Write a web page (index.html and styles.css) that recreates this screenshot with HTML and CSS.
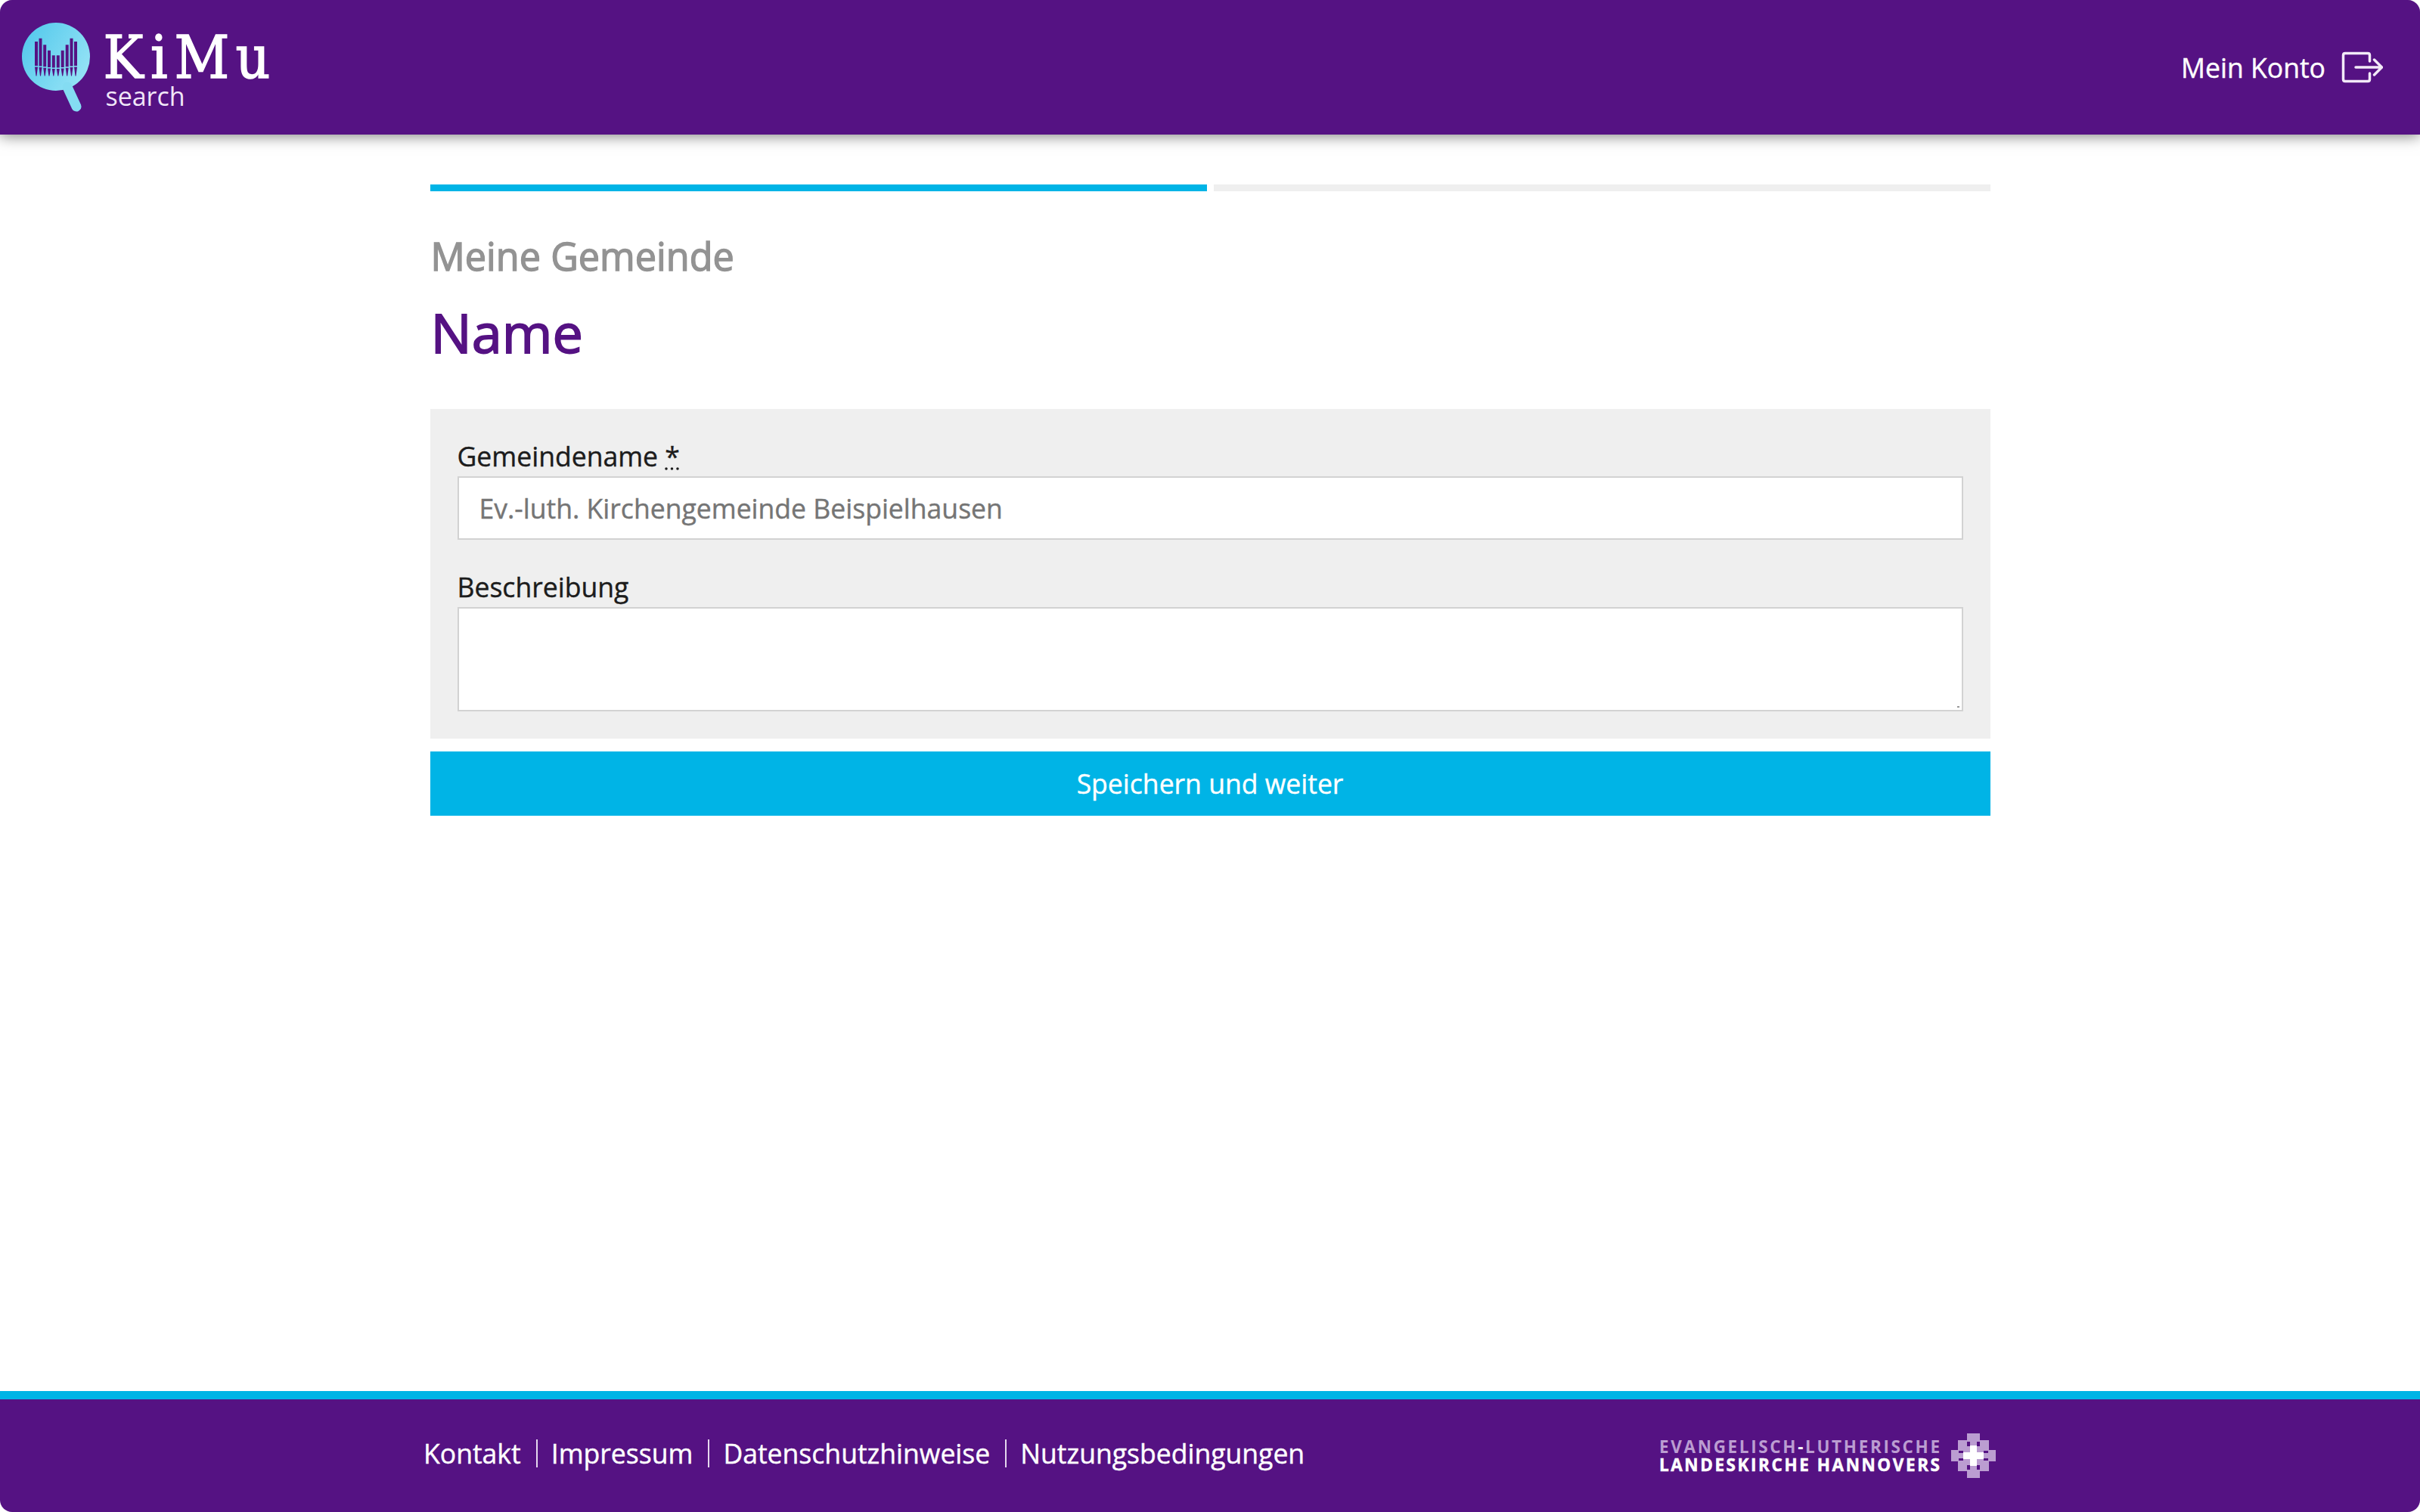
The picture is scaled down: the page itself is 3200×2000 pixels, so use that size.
FILE: index.html
```
<!doctype html>
<html lang="de">
<head>
    <meta charset="UTF-8">
    <meta name="viewport" content="width=device-width, initial-scale=1.0">
    <title>KiMu search</title>
    <link rel="stylesheet" href="styles.css">
</head>
<body>
<div class="page">
    <header class="header">
        <a class="logo" href="#">
            <svg width="370" height="178" viewBox="0 0 370 178">
                <defs>
                    <linearGradient id="glass" x1="0" y1="0.2" x2="1" y2="0.8">
                        <stop offset="0" stop-color="#54c9ec"/>
                        <stop offset="1" stop-color="#98e4f6"/>
                    </linearGradient>
                </defs>
                <circle cx="74" cy="75" r="45" fill="url(#glass)"/>
                <path d="M89 115L101 141" stroke="#84dcf2" stroke-width="13" stroke-linecap="round"/>
                <g fill="#551283">
                    <path d="M46 55h4v32h-4zM51.500 50.700h4v36.800h-4zM57.200 59.300h4v29h-4zM63 66.700h4v22.300h-4zM68.800 73.300h4v16.200h-4zM74.800 73.300h4v16.200h-4zM80.700 66.700h4v22.300h-4zM86.700 59.300h4v29h-4zM92.500 50.700h4v36.800h-4zM98 55h4v32h-4z"/>
                    <path d="M46 88.500h4l-1.500 12h-1zM51.500 89h4l-1.500 11.500h-1zM57.200 89.800h4l-1.500 10.700h-1zM63 90.500h4l-1.500 10h-1zM68.800 91h4l-1.500 9.500h-1zM74.800 91h4l-1.500 9.500h-1zM80.700 90.500h4l-1.500 10h-1zM86.700 89.800h4l-1.500 10.700h-1zM92.500 89h4l-1.500 11.500h-1zM98 88.500h4l-1.500 12h-1z"/>
                </g>
                <text class="logo-name" x="136.500 199 230.500 311.500" y="103">KiMu</text>
                <text class="logo-sub" x="139.500" y="139.500" textLength="105">search</text>
            </svg>
        </a>
        <nav class="account">
            <a href="#">Mein Konto</a>
            <a class="logout" href="#">
                <svg width="56" height="44" viewBox="0 0 56 44">
                    <path d="M38.500 14V6Q38.500 3.500 36 3.500H6Q3.500 3.500 3.500 6V38Q3.500 40.500 6 40.500H36Q38.500 40.500 38.500 38V30M20 22H54M44.500 12L54.500 22L44.500 32"/>
                </svg>
            </a>
        </nav>
    </header>

    <main class="content">
        <div class="progress">
            <span class="step active"></span>
            <span class="step"></span>
        </div>
        <h2>Meine Gemeinde</h2>
        <h1>Name</h1>
        <form>
            <div class="fields">
                <label for="name">Gemeindename <abbr title="Pflichtfeld">*</abbr></label>
                <input id="name" name="name" type="text" placeholder="Ev.-luth. Kirchengemeinde Beispielhausen">
                <label for="description">Beschreibung</label>
                <textarea id="description" name="description"></textarea>
            </div>
            <button type="submit">Speichern und weiter</button>
        </form>
    </main>

    <footer class="footer">
        <nav class="footer-links">
            <a href="#">Kontakt</a>
            <a href="#">Impressum</a>
            <a href="#">Datenschutzhinweise</a>
            <a href="#">Nutzungsbedingungen</a>
        </nav>
        <svg class="church" width="446" height="62" viewBox="0 0 446 62">
            <text class="church-light" x="0" y="27" textLength="371">EVANGELISCH<tspan class="hyphen">-</tspan>LUTHERISCHE</text>
            <text class="church-bold" x="0" y="51" textLength="371">LANDESKIRCHE HANNOVERS</text>
            <g fill="#bb9dd1">
                <path d="M407 1h17v10h-17zM407 50h17v10h-17zM386 23h10v15h-10zM435 23h10v15h-10z"/>
                <path fill-rule="evenodd" d="M395 10h41v13h7v15h-7v13h-41v-13h-7v-15h7zM407 12v6h4v-6zM420 12v6h4v-6zM407 43v6h4v-6zM420 43v6h4v-6zM396 24v3h6v-3zM396 34v3h6v-3zM429 24v3h6v-3zM429 34v3h6v-3z"/>
            </g>
            <path fill="#fff" d="M411 17h9v9h9v9h-9v9h-9v-9h-9v-9h9z"/>
        </svg>
    </footer>
</div>
</body>
</html>
```
FILE: styles.css
```
* {
    box-sizing: border-box;
}
body {
    margin: 0;
    background-color: #FFF;
    color: #1c1c1c;
    font-family: "Open Sans", sans-serif;
    font-size: 35.55px;
    line-height: 54px;
    -webkit-text-stroke: 0.4px;
}
a {
    color: #FFF;
    text-decoration: none;
}
svg {
    display: block;
}
.page {
    display: flex;
    flex-direction: column;
    height: 100vh;
    border-radius: 16px;
    overflow: hidden;
}
.header {
    display: flex;
    align-items: center;
    justify-content: space-between;
    height: 178px;
    padding-right: 49px;
    background-color: #551283;
    box-shadow: 0 2px 18px rgba(0, 0, 0, 0.5);
}
.logo-name {
    fill: #FFF;
    stroke: #FFF;
    stroke-width: 1.4px;
    font-family: "DejaVu Serif Condensed", "DejaVu Serif", serif;
    font-stretch: condensed;
    font-size: 79px;
}
.logo-sub {
    fill: #f1e6f8;
    font-size: 34px;
}
.account {
    display: flex;
    align-items: center;
    gap: 20px;
    line-height: 52px;
}
.logout path {
    fill: none;
    stroke: #f3eaf8;
    stroke-width: 3.5;
    stroke-linecap: round;
    stroke-linejoin: round;
}
.content {
    flex: 1;
    width: 2063px;
    margin: 0 auto;
    padding-top: 66px;
}
.progress {
    display: flex;
    gap: 9px;
}
.step {
    flex: 1;
    height: 9px;
    background-color: #EFEFEF;
}
.step.active {
    background-color: #00B4E6;
}
h1, h2 {
    margin: 0;
    font-weight: 500;
    -webkit-text-stroke: 1.4px;
}
h2 {
    margin-top: 54px;
    padding-left: 1px;
    color: #939393;
    font-size: 50.4px;
    line-height: 64px;
}
h1 {
    margin-top: 23px;
    padding-left: 1px;
    color: #551283;
    font-size: 72px;
    line-height: 90px;
    -webkit-text-stroke: 1.8px;
}
.fields {
    display: flex;
    flex-direction: column;
    height: 436px;
    margin-top: 57px;
    padding: 35px 36px;
    background-color: #EFEFEF;
}
abbr {
    text-decoration: underline dotted;
}
input, textarea {
    width: 100%;
    margin: 0;
    padding: 0 27px;
    border: 2px solid #D2D2D2;
    border-radius: 0;
    background-color: #FFF;
    font: inherit;
}
input {
    height: 84px;
    margin-bottom: 35px;
    padding-bottom: 1px;
}
input::placeholder {
    color: #757575;
}
textarea {
    height: 138px;
    resize: none;
    /* small grip in the corner */
    background-image: linear-gradient(#999, #999);
    background-repeat: no-repeat;
    background-position: right 3px bottom 3px;
    background-size: 3px 2px;
}
button {
    display: block;
    width: 100%;
    height: 85px;
    margin-top: 17px;
    padding: 0 0 2px;
    border: none;
    background-color: #00B4E6;
    color: #FFF;
    font: inherit;
}
.footer {
    display: flex;
    align-items: center;
    justify-content: space-between;
    height: 160px;
    padding: 0 560px;
    border-top: 11px solid #00B4E6;
    background-color: #551283;
}
.footer-links {
    display: flex;
    align-items: center;
    padding-bottom: 7px;
}
.footer-links a {
    line-height: 37px;
}
.footer-links a + a {
    margin-left: 20px;
    padding-left: 18px;
    border-left: 2px solid #e5d8ee;
}
.church text {
    font-family: "Open Sans", sans-serif;
    font-size: 22.5px;
    font-weight: 700;
    -webkit-text-stroke: 0;
}
.church .church-light {
    fill: #bb9dd1;
}
.church .church-bold {
    fill: #FFF;
    stroke: #FFF;
    stroke-width: 0.5px;
}
.church .hyphen {
    fill: #FFF;
}
```
